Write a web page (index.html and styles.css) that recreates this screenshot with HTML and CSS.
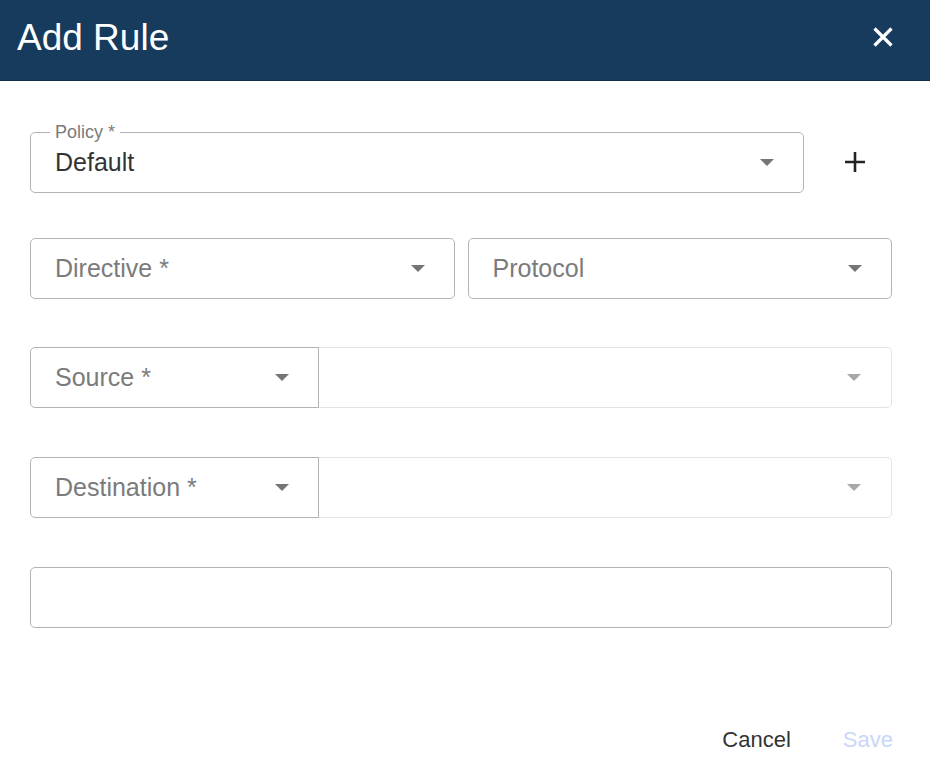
FILE: index.html
```html
<!DOCTYPE html>
<html>
<head>
<meta charset="utf-8">
<link rel="stylesheet" href="styles.css">
</head>
<body>
<div class="dialog">
  <header class="header">
    <h1 class="title">Add Rule</h1>
    <button class="close" aria-label="Close">
      <svg width="22" height="22" viewBox="0 0 22 22"><path d="M2.5 2.5 L19.5 19.5 M19.5 2.5 L2.5 19.5" stroke="#fff" stroke-width="3.2" stroke-linecap="butt"/></svg>
    </button>
  </header>
  <main class="content">
    <div class="row row-policy">
      <div class="field field-policy">
        <span class="notch-label">Policy *</span>
        <span class="value">Default</span>
        <span class="arrow"></span>
      </div>
      <button class="add" aria-label="Add">
        <svg width="22" height="22" viewBox="0 0 22 22"><path d="M11 1 V21 M1 11 H21" stroke="#222" stroke-width="2.6"/></svg>
      </button>
    </div>
    <div class="row row-two">
      <div class="field"><span class="placeholder">Directive *</span><span class="arrow"></span></div>
      <div class="field"><span class="placeholder">Protocol</span><span class="arrow"></span></div>
    </div>
    <div class="row row-split">
      <div class="field field-left"><span class="placeholder">Source *</span><span class="arrow"></span></div>
      <div class="field field-right"><span class="arrow arrow-light"></span></div>
    </div>
    <div class="row row-split">
      <div class="field field-left"><span class="placeholder">Destination *</span><span class="arrow"></span></div>
      <div class="field field-right"><span class="arrow arrow-light"></span></div>
    </div>
    <div class="row">
      <div class="field field-text"></div>
    </div>
  </main>
  <footer class="actions">
    <button class="btn btn-cancel">Cancel</button>
    <button class="btn btn-save" disabled>Save</button>
  </footer>
</div>
</body>
</html>
```
FILE: styles.css
```css
* { box-sizing: border-box; }
html, body {
  margin: 0;
  padding: 0;
  background: #fff;
  font-family: "Liberation Sans", Arial, sans-serif;
}
.dialog {
  width: 930px;
  height: 778px;
  display: flex;
  flex-direction: column;
}
.header {
  flex: 0 0 81px;
  height: 81px;
  background: #163b5d;
  border-bottom: 1px solid #0f2c48;
  display: flex;
  align-items: center;
  justify-content: space-between;
  padding: 0 36px 0 17px;
}
.title {
  margin: 0;
  color: #fff;
  font-weight: 400;
  font-size: 37px;
  line-height: 1;
  position: relative;
  top: -3px;
}
.close {
  border: 0;
  background: none;
  padding: 0;
  width: 22px;
  height: 22px;
  display: flex;
  position: relative;
  top: -3px;
}
.content {
  flex: 0 0 auto;
  padding: 51px 38px 0 30px;
  display: flex;
  flex-direction: column;
}
.row {
  display: flex;
  height: 61px;
  margin-bottom: 48px;
}
.row-policy { margin-bottom: 45px; }
.row-two { gap: 13px; }
.field {
  flex: 1;
  position: relative;
  border: 1px solid #b4b4b4;
  border-radius: 5px;
  display: flex;
  align-items: center;
  padding: 0 29px 0 24px;
}
.field-policy { flex: 0 0 774px; }
.notch-label {
  position: absolute;
  left: 19px;
  top: -12px;
  background: #fff;
  padding: 0 5px;
  font-size: 18px;
  line-height: 22px;
  color: #7a7a7a;
}
.value {
  font-size: 25px;
  color: #333;
  flex: 1;
}
.placeholder {
  font-size: 25px;
  color: #7b7b7b;
  flex: 1;
}
.arrow {
  margin-left: auto;
  width: 0;
  height: 0;
  border-left: 7px solid transparent;
  border-right: 7px solid transparent;
  border-top: 7px solid #757575;
}
.arrow-light { border-top-color: #a8a8a8; }
.add {
  flex: 1;
  border: 0;
  background: none;
  display: flex;
  align-items: center;
  justify-content: center;
  padding: 0 0 2px 14px;
}
.row-split { margin-bottom: 49px; }
.field-left {
  flex: 0 0 289px;
  border-radius: 5px 0 0 5px;
}
.field-right {
  flex: 1;
  border: 1px solid #e2e2e2;
  border-left: 0;
  border-radius: 0 5px 5px 0;
  padding-right: 30px;
}
.field-text { flex: 1; }
.actions {
  margin-top: auto;
  display: flex;
  justify-content: flex-end;
  align-items: center;
  gap: 52px;
  padding: 0 37px 26px 0;
}
.btn {
  border: 0;
  background: none;
  padding: 0;
  font-family: "Liberation Sans", Arial, sans-serif;
  font-size: 22px;
  line-height: 24px;
}
.btn-cancel { color: #333; }
.btn-save { color: #c8d7f7; }
```
